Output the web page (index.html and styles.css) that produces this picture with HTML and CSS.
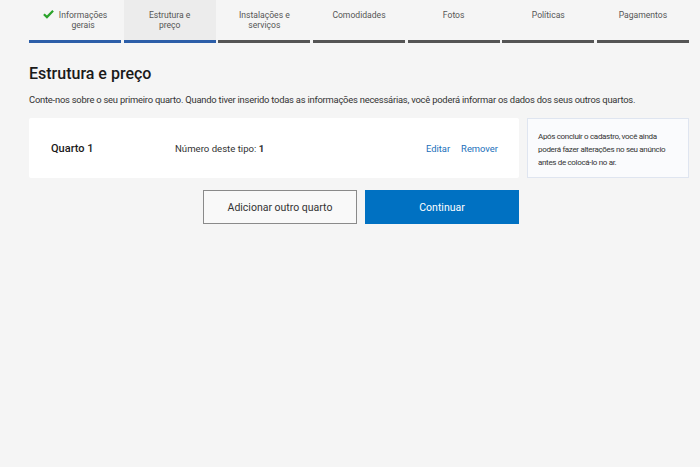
FILE: index.html
```html
<!DOCTYPE html>
<html lang="pt-BR">
<head>
    <meta charset="UTF-8">
    <meta name="viewport" content="width=device-width, initial-scale=1.0">
    <title>Estrutura e preço</title>
    <link rel="stylesheet" href="styles.css">
</head>
<body>
    <div class="page">
        <nav class="steps">
            <div class="step done">
                <svg class="check" viewBox="0 0 12 10" width="11" height="10">
                    <path d="M1 5.2 L4.3 8.4 L11 1.4" fill="none" stroke="#2ba32b" stroke-width="2.4"/>
                </svg>
                <span>Informações<br>gerais</span>
            </div>
            <div class="step done active"><span>Estrutura e<br>preço</span></div>
            <div class="step"><span>Instalações e<br>serviços</span></div>
            <div class="step"><span>Comodidades</span></div>
            <div class="step"><span>Fotos</span></div>
            <div class="step"><span>Políticas</span></div>
            <div class="step"><span>Pagamentos</span></div>
        </nav>

        <h1 class="title">Estrutura e preço</h1>
        <p class="intro">Conte-nos sobre o seu primeiro quarto. Quando tiver inserido todas as informações necessárias, você poderá informar os dados dos seus outros quartos.</p>

        <div class="room-row">
            <div class="room-card">
                <div class="room-name">Quarto 1</div>
                <div class="room-count">Número deste tipo: <b>1</b></div>
                <div class="room-actions">
                    <a href="#">Editar</a>
                    <a href="#">Remover</a>
                </div>
            </div>
            <div class="info-box">
                Após concluir o cadastro, você ainda poderá fazer alterações no seu anúncio antes de colocá-lo no ar.
            </div>
        </div>

        <div class="buttons">
            <button class="btn-outline">Adicionar outro quarto</button>
            <button class="btn-primary">Continuar</button>
        </div>
    </div>
</body>
</html>
```

FILE: styles.css
```css
body {
    margin: 0;
    background-color: #f5f5f5;
    font-family: Roboto, "Noto Sans", sans-serif;
    color: #262626;
}

.page {
    width: 660px;
    padding-left: 29px;
}

.steps {
    display: flex;
    gap: 2.5px;
}

.step {
    flex: 1;
    height: 43px;
    border-bottom: 3px solid #555;
    display: flex;
    justify-content: center;
    align-items: flex-start;
    gap: 5px;
    padding-top: 9px;
    box-sizing: border-box;
    font-size: 8.6px;
    line-height: 10px;
    color: #555;
    text-align: center;
}

.step span {
    padding-top: 1px;
}

.step.done {
    border-bottom-color: #2c5ea8;
}

.step.active {
    background-color: #ececec;
}

.title {
    margin: 20px 0 0;
    font-size: 16px;
    font-weight: 500;
    line-height: 22px;
    color: #1a1a1a;
}

.intro {
    margin: 8px 0 0;
    font-size: 9.4px;
    letter-spacing: -0.22px;
    line-height: 13px;
    color: #333;
}

.room-row {
    display: flex;
    gap: 8px;
    margin-top: 12px;
}

.room-card {
    width: 490px;
    height: 60px;
    background: #fff;
    border-radius: 2px;
    display: flex;
    align-items: center;
    box-sizing: border-box;
    padding: 0 21px 0 22px;
    font-size: 9.6px;
}

.room-name {
    width: 124px;
    font-size: 11px;
    font-weight: 500;
    color: #1a1a1a;
}

.room-count {
    flex: 1;
    color: #333;
}

.room-actions {
    display: flex;
    gap: 11px;
    font-size: 9.4px;
}

.room-actions a {
    color: #1a6fba;
    text-decoration: none;
}

.info-box {
    width: 162px;
    height: 60px;
    box-sizing: border-box;
    background: #fafbfd;
    border: 1px solid #dfe5f0;
    padding: 11px 9px 0 10px;
    font-size: 8px;
    letter-spacing: -0.33px;
    line-height: 13px;
    color: #333;
}

.buttons {
    width: 490px;
    display: flex;
    justify-content: flex-end;
    gap: 8px;
    margin-top: 12px;
}

.buttons button {
    width: 154px;
    height: 34px;
    font-family: Roboto, "Noto Sans", sans-serif;
    font-size: 10.5px;
    cursor: pointer;
}

.btn-outline {
    background: #f9f9f9;
    border: 1px solid #8a8a8a;
    color: #333;
}

.btn-primary {
    background: #0071c2;
    border: none;
    color: #fff;
}
```
